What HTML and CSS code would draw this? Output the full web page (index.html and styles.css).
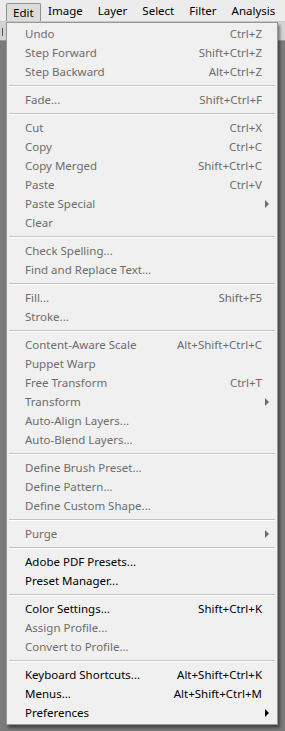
FILE: index.html
```html
<!DOCTYPE html>
<html lang="en">
<head>
  <meta charset="UTF-8">
  <title>Edit menu</title>
  <link rel="stylesheet" href="styles.css">
</head>
<body>

  <div class="menubar">
    <span class="top-item active">Edit</span>
    <span class="top-item">Image</span>
    <span class="top-item">Layer</span>
    <span class="top-item">Select</span>
    <span class="top-item">Filter</span>
    <span class="top-item">Analysis</span>
  </div>
  <div class="options-bar"><span class="peek"></span></div>
  <div class="workspace"></div>

  <div class="menu">
    <div class="item off"><span>Undo</span><span class="key">Ctrl+Z</span></div>
    <div class="item off"><span>Step Forward</span><span class="key">Shift+Ctrl+Z</span></div>
    <div class="item off"><span>Step Backward</span><span class="key">Alt+Ctrl+Z</span></div>
    <div class="sep"></div>
    <div class="item off"><span>Fade...</span><span class="key">Shift+Ctrl+F</span></div>
    <div class="sep"></div>
    <div class="item off"><span>Cut</span><span class="key">Ctrl+X</span></div>
    <div class="item off"><span>Copy</span><span class="key">Ctrl+C</span></div>
    <div class="item off"><span>Copy Merged</span><span class="key">Shift+Ctrl+C</span></div>
    <div class="item off"><span>Paste</span><span class="key">Ctrl+V</span></div>
    <div class="item off sub"><span>Paste Special</span></div>
    <div class="item off"><span>Clear</span></div>
    <div class="sep"></div>
    <div class="item off"><span>Check Spelling...</span></div>
    <div class="item off"><span>Find and Replace Text...</span></div>
    <div class="sep"></div>
    <div class="item off"><span>Fill...</span><span class="key">Shift+F5</span></div>
    <div class="item off"><span>Stroke...</span></div>
    <div class="sep"></div>
    <div class="item off"><span>Content-Aware Scale</span><span class="key">Alt+Shift+Ctrl+C</span></div>
    <div class="item off"><span>Puppet Warp</span></div>
    <div class="item off"><span>Free Transform</span><span class="key">Ctrl+T</span></div>
    <div class="item off sub"><span>Transform</span></div>
    <div class="item off"><span>Auto-Align Layers...</span></div>
    <div class="item off"><span>Auto-Blend Layers...</span></div>
    <div class="sep"></div>
    <div class="item off"><span>Define Brush Preset...</span></div>
    <div class="item off"><span>Define Pattern...</span></div>
    <div class="item off"><span>Define Custom Shape...</span></div>
    <div class="sep"></div>
    <div class="item off sub"><span>Purge</span></div>
    <div class="sep"></div>
    <div class="item"><span>Adobe PDF Presets...</span></div>
    <div class="item"><span>Preset Manager...</span></div>
    <div class="sep"></div>
    <div class="item"><span>Color Settings...</span><span class="key">Shift+Ctrl+K</span></div>
    <div class="item off"><span>Assign Profile...</span></div>
    <div class="item off"><span>Convert to Profile...</span></div>
    <div class="sep"></div>
    <div class="item"><span>Keyboard Shortcuts...</span><span class="key">Alt+Shift+Ctrl+K</span></div>
    <div class="item"><span>Menus...</span><span class="key">Alt+Shift+Ctrl+M</span></div>
    <div class="item sub"><span>Preferences</span></div>
  </div>

</body>
</html>
```

FILE: styles.css
```css
body {
  margin: 0;
  font-family: "Noto Sans", "Open Sans", sans-serif;
  font-size: 11.5px;
  background: #7b7b7b;
  color: #000;
}
.menubar {
  display: flex;
  height: 22px;
  padding-left: 6px;
  background: #ececec;
  border-bottom: 1px solid #c9c9c9;
  box-sizing: border-box;
  overflow: hidden;
}
.top-item {
  padding: 2px 7.5px 0;
  line-height: 18px;
  font-size: 11.5px;
  white-space: nowrap;
}
.top-item.active {
  margin-top: 3px;
  padding: 0 6px;
  background: #dcdcdc;
  border: 1px solid #8f8f8f;
  border-bottom: none;
  border-radius: 2px 2px 0 0;
}
.options-bar {
  height: 18px;
  background: #d4d4d4;
  border-bottom: 1px solid #9a9a9a;
}
.peek {
  display: inline-block;
  width: 1px;
  height: 8px;
  margin: 6px 0 0 2px;
  background: #555;
}
.workspace {
  height: 700px;
  background: #7b7b7b;
}
.menu {
  position: absolute;
  left: 6px;
  top: 22px;
  width: 270px;
  padding: 1px 0 2px;
  background: #f0f0f0;
  border: 1px solid #979797;
  box-shadow: 2px 3px 3px rgba(0,0,0,0.45);
}
.item {
  display: flex;
  justify-content: space-between;
  align-items: center;
  height: 19px;
  padding: 0 15px 0 18px;
  white-space: nowrap;
  position: relative;
}
.item.off {
  color: #6d6d6d;
}
.sub::after {
  content: "";
  position: absolute;
  right: 8px;
  top: 6px;
  border-left: 4px solid #000;
  border-top: 4px solid transparent;
  border-bottom: 4px solid transparent;
}
.sub.off::after {
  border-left-color: #6d6d6d;
}
.sep {
  height: 0;
  margin: 4px 2px 3px 2px;
  border-top: 1px solid #c4c4c4;
  border-bottom: 1px solid #fff;
}
```
